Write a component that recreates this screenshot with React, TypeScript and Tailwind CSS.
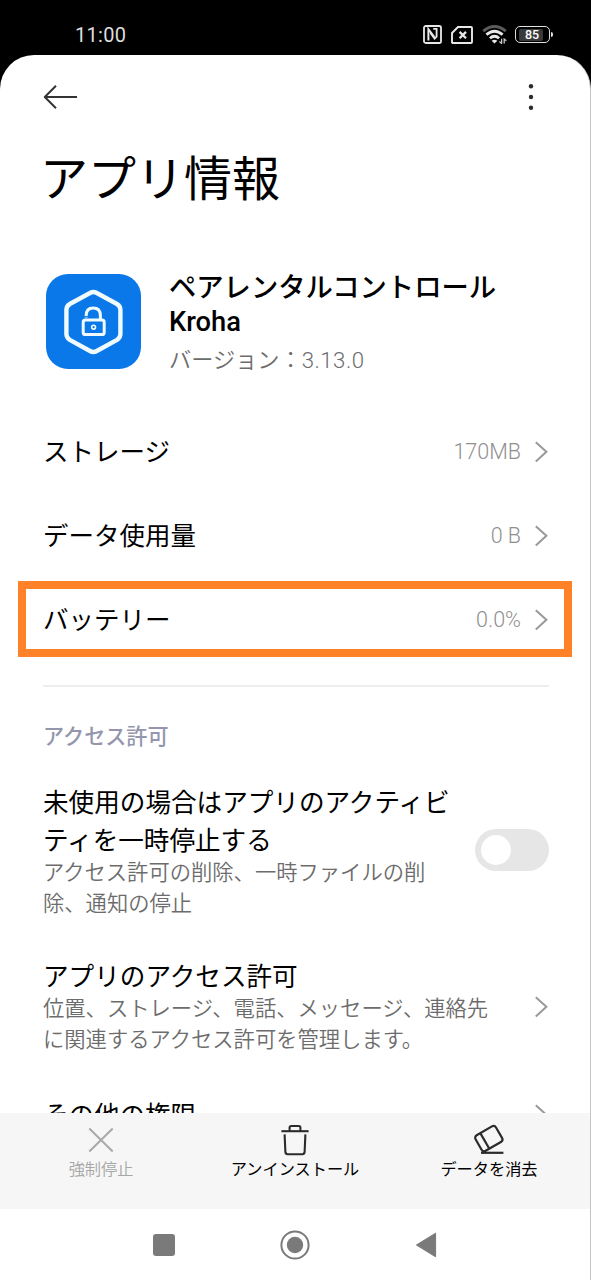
import type { ReactNode } from 'react';

type InfoRowProps = {
  label: string;
  value: string;
};

type BottomActionProps = {
  label: string;
  icon: ReactNode;
  disabled?: boolean;
};

const usageRows: InfoRowProps[] = [
  { label: 'ストレージ', value: '170MB' },
  { label: 'データ使用量', value: '0 B' },
];

function ChevronIcon() {
  return (
    <svg width="14" height="22" viewBox="0 0 14 22" fill="none" className="shrink-0">
      <path d="M0.8 1.2 L11.4 10.8 L0.8 20.4" stroke="#999999" strokeWidth="2" />
    </svg>
  );
}

function StatusBar() {
  return (
    <div className="flex h-[55px] shrink-0 items-start justify-between pt-[23px] pr-[38px] pl-[75px]">
      <span className="text-[20px] leading-[24px] tracking-[0.3px] text-[#dedede]">11:00</span>
      <div className="flex items-center pt-[2px]">
        <svg width="19" height="19" viewBox="0 0 19 19" fill="none" stroke="#e8e8e8" strokeWidth="1.8">
          <rect x="1" y="1" width="17" height="17" rx="1.8" />
          <path d="M5.4 15.6 V4.2 L11.4 12" strokeWidth="2" />
          <path d="M7.4 8 L11.6 13.6 L13.6 11.6 V3.8 H10.2" strokeWidth="1.8" />
        </svg>
        <svg
          width="22"
          height="18"
          viewBox="0 0 22 18"
          fill="none"
          stroke="#e8e8e8"
          strokeWidth="1.9"
          className="ml-[9px]"
        >
          <path d="M7 1 H20 Q21 1 21 2 V16 Q21 17 20 17 H2 Q1 17 1 16 V7 Z" />
          <path d="M8.6 5.9 L15 12.3 M15 5.9 L8.6 12.3" strokeWidth="2.3" />
        </svg>
        <svg width="26" height="19" viewBox="0 0 26 19" fill="none" className="ml-[9px]">
          <path d="M1.2 6.2 Q12.5 -3.2 23.8 6.2" stroke="#5c5c5c" strokeWidth="2.8" />
          <path d="M4.4 9.6 Q12.5 2.8 20.6 9.6" stroke="#e8e8e8" strokeWidth="2.8" />
          <path d="M7.9 13.2 Q12.5 9.2 17.1 13.2" stroke="#e8e8e8" strokeWidth="2.8" />
          <path d="M9.6 15.8 Q12.5 13.6 15.4 15.8 L12.5 18.6 Z" fill="#e8e8e8" />
          <path d="M19.6 13.8 V18.4 L17.4 16.4" stroke="#c8c8c8" strokeWidth="1.3" />
          <path d="M22.2 18.6 V14 L24.4 15.8" stroke="#c8c8c8" strokeWidth="1.3" />
        </svg>
        <div className="ml-[7px] flex h-[17px] w-[35px] items-center rounded-[5px] border-[1.5px] border-[#e0e0e0] px-[3px]">
          <span className="flex h-[12px] w-[24px] items-center justify-center rounded-[2px] bg-[#3a3a3a] pl-[2px] text-[12.5px] leading-none font-medium text-white">
            <span className="pt-[1px]">85</span>
          </span>
        </div>
        <span className="ml-px h-[5px] w-[2px] rounded-r-sm bg-[#e0e0e0]" />
      </div>
    </div>
  );
}

function AppLogo() {
  return (
    <div className="flex h-[95px] w-[95px] shrink-0 items-center justify-center rounded-[22px] bg-[#0a78e8]">
      <svg width="60" height="66" viewBox="0 0 60 66" fill="none" stroke="#f0fbff">
        <path
          d="M26 4 Q29.4 2 32.8 4 L53 15 Q56.4 17 56.4 20.8 V45 Q56.4 48.8 53 50.8 L32.8 62 Q29.4 64 26 62 L5.8 50.8 Q2.4 48.8 2.4 45 V20.8 Q2.4 17 5.8 15 Z"
          strokeWidth="4.4"
        />
        <rect x="19.2" y="31" width="21" height="14.6" rx="2.2" strokeWidth="3" />
        <path d="M22.2 28.6 V26.6 Q22.2 19 29.2 19 Q36.4 19 36.4 26.6 V31" strokeWidth="3" />
        <path d="M17.4 27.6 H26" stroke="#0a78e8" strokeWidth="1" />
        <circle cx="29.6" cy="38.2" r="1.9" strokeWidth="1.6" />
      </svg>
    </div>
  );
}

function InfoRow({ label, value }: InfoRowProps) {
  return (
    <div className="flex h-[84px] items-center justify-between">
      <span className="text-[25.5px] text-black">{label}</span>
      <span className="flex items-center gap-[14px] text-[21.5px] font-[350] text-[#8f8f8f]">
        {value}
        <ChevronIcon />
      </span>
    </div>
  );
}

function BottomAction({ label, icon, disabled = false }: BottomActionProps) {
  return (
    <div className="flex w-[194px] flex-col items-center">
      {icon}
      <span
        className={
          disabled
            ? 'mt-px text-[16.2px] leading-[24px] font-[350] text-[#a6a6a6]'
            : 'mt-px text-[16.2px] leading-[24px] text-black'
        }
      >
        {label}
      </span>
    </div>
  );
}

function BottomBar() {
  return (
    <div className="flex h-[96px] shrink-0 justify-center bg-[#f6f6f6] pt-[10px]">
      <BottomAction
        disabled
        label="強制停止"
        icon={
          <svg width="36" height="34" viewBox="0 0 36 34" fill="none">
            <path d="M6.3 5.5 L29.7 28.5 M29.7 5.5 L6.3 28.5" stroke="#a9a9a9" strokeWidth="2" />
          </svg>
        }
      />
      <BottomAction
        label="アンインストール"
        icon={
          <svg width="36" height="34" viewBox="0 0 36 34" fill="none" stroke="#2b2b2b" strokeWidth="2.1">
            <path d="M4.4 8.2 H31.6" />
            <path d="M12.6 8 V4.6 Q12.6 3 14.2 3 H21.8 Q23.4 3 23.4 4.6 V8" />
            <path d="M7.6 11.4 L8.4 29.2 Q8.6 31.2 10.6 31.2 H25.4 Q27.4 31.2 27.6 29.2 L28.4 11.4" />
          </svg>
        }
      />
      <BottomAction
        label="データを消去"
        icon={
          <svg width="36" height="34" viewBox="0 0 36 34" fill="none" stroke="#2b2b2b" strokeWidth="2.2">
            <g transform="rotate(-30 17.8 15.6)">
              <rect x="6" y="6.6" width="23.6" height="18" rx="3" />
              <path d="M13.2 6.6 V24.6" />
            </g>
            <path d="M10 29.8 H32.4" />
          </svg>
        }
      />
    </div>
  );
}

function NavigationBar() {
  return (
    <div className="flex h-[71px] shrink-0 items-center justify-center gap-[105px] bg-white">
      <span className="h-[22px] w-[22px] rounded-[3px] bg-[#7a7a7a]" />
      <svg width="30" height="30" viewBox="0 0 30 30" fill="none">
        <circle cx="15" cy="15" r="13.6" stroke="#7a7a7a" strokeWidth="2" />
        <circle cx="15" cy="15" r="8.2" fill="#7a7a7a" />
      </svg>
      <svg width="22" height="26" viewBox="0 0 22 26">
        <path d="M1.4 13 L20.6 1.2 V24.8 Z" fill="#7a7a7a" stroke="#7a7a7a" strokeLinejoin="round" />
      </svg>
    </div>
  );
}

export default function App() {
  return (
    <div className="flex h-[1280px] w-[591px] flex-col overflow-hidden bg-black font-['Roboto','Noto_Sans_CJK_JP',sans-serif]">
      <StatusBar />
      <div className="flex min-h-0 flex-1 flex-col overflow-hidden rounded-t-[34px] border-r border-[#c4c4c4] bg-white">
        <main className="min-h-0 flex-1 overflow-hidden pr-[41px] pl-[43px]">
          <header className="flex h-[84px] items-center justify-between">
            <svg width="36" height="26" viewBox="0 0 36 26" fill="none" stroke="#333333" strokeWidth="2">
              <path d="M1.8 13 H34" />
              <path d="M13 1.8 L1.8 13 L13 24.2" strokeLinejoin="round" />
            </svg>
            <svg width="36" height="28" viewBox="0 0 36 28" fill="#2b2b2b">
              <circle cx="18" cy="3.3" r="2.2" />
              <circle cx="18" cy="14" r="2.2" />
              <circle cx="18" cy="24.7" r="2.2" />
            </svg>
          </header>
          <h1 className="mt-[6px] -ml-[3px] text-[48px] leading-[70px] text-black">アプリ情報</h1>

          <section className="mt-[55px] flex pl-[3px]">
            <div className="pt-1">
              <AppLogo />
            </div>
            <div className="ml-[28px] pt-px">
              <p className="text-[27.3px] leading-[34px] font-medium whitespace-nowrap text-black">
                ペアレンタルコントロール
                <br />
                Kroha
              </p>
              <p className="mt-[5px] text-[22.2px] leading-[32px] font-[350] text-[#6c6c6c]">
                バージョン：<span className="tracking-[0.5px]">3.13.0</span>
              </p>
            </div>
          </section>

          <section className="mt-[34px]">
            {usageRows.map((row) => (
              <InfoRow key={row.label} {...row} />
            ))}
            <div className="mt-[3px] -mr-[23px] -ml-[25px] h-[76px] border-8 border-[#ff8228] pr-[15px] pl-[17px] [&>div]:h-[62px]">
              <InfoRow label="バッテリー" value="0.0%" />
            </div>
          </section>

          <div className="mt-[28px] h-[2px] bg-[#eeeeee]" />
          <h2 className="mt-[34px] text-[21.1px] leading-[32px] font-medium text-[#9496ad]">アクセス許可</h2>

          <section className="mt-[31px] flex items-center justify-between">
            <div className="whitespace-nowrap">
              <p className="text-[25.6px] leading-[38px] text-black">
                未使用の場合はアプリのアクティビ
                <br />
                ティを一時停止する
              </p>
              <p className="-mt-[3px] text-[21.3px] leading-[31px] font-[350] text-[#6c6c6c]">
                アクセス許可の削除、一時ファイルの削
                <br />
                除、通知の停止
              </p>
            </div>
            <div className="mb-[3px] flex h-[42px] w-[74px] shrink-0 items-center rounded-full bg-[#e6e6e6] pl-[6px]">
              <span className="h-[30px] w-[30px] rounded-full bg-white" />
            </div>
          </section>

          <section className="mt-[39px] flex items-center justify-between">
            <div className="whitespace-nowrap">
              <p className="text-[25.6px] leading-[38px] text-black">アプリのアクセス許可</p>
              <p className="-mt-[3px] text-[21.3px] leading-[31px] font-[350] text-[#6c6c6c]">
                位置、ストレージ、電話、メッセージ、連絡先
                <br />
                に関連するアクセス許可を管理します。
              </p>
            </div>
            <ChevronIcon />
          </section>

          <section className="mt-[41px] flex items-center justify-between">
            <p className="text-[25.5px] leading-[38px] text-black">その他の権限</p>
            <ChevronIcon />
          </section>
        </main>
        <BottomBar />
        <NavigationBar />
      </div>
    </div>
  );
}
